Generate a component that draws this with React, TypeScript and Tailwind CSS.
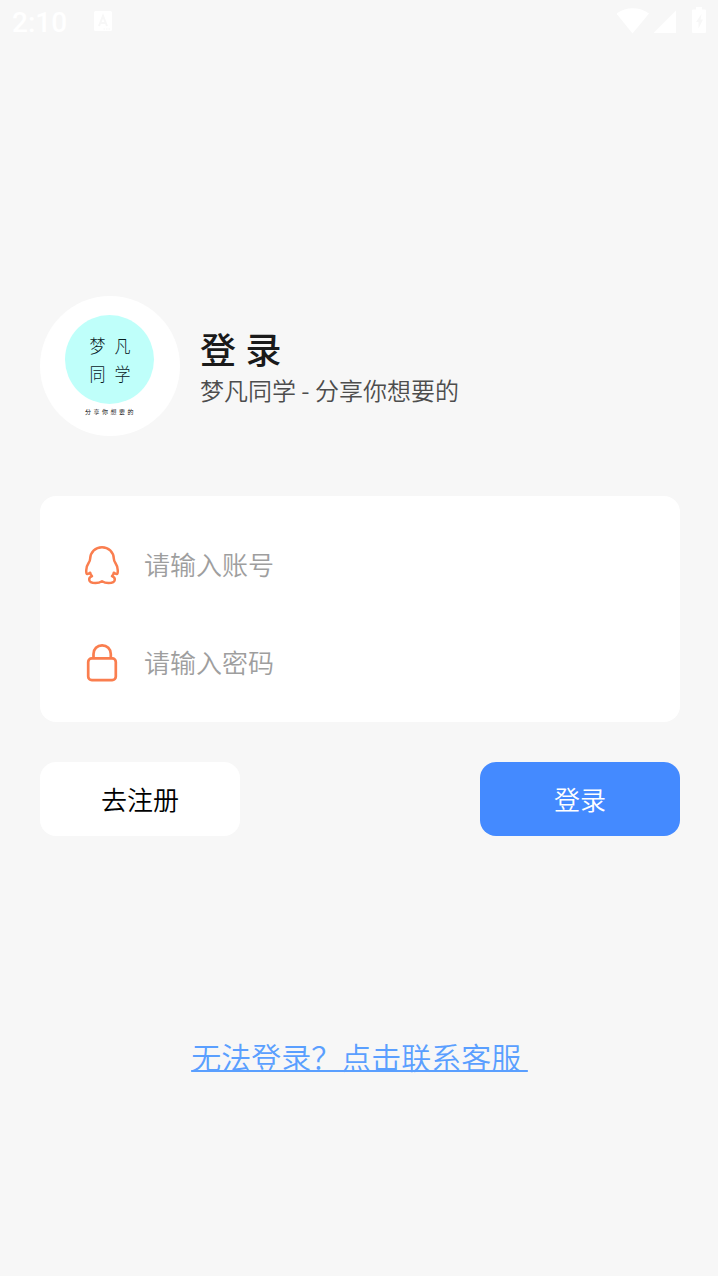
import type { ReactNode } from "react";

function StatusBar() {
  return (
    <div className="flex h-11 items-center justify-between pl-3 pr-[11px] text-white">
      <div className="flex items-center">
        <span className="w-[82px] pt-px font-[Roboto,sans-serif] text-[28px] font-medium leading-none">2:10</span>
        <svg width="18" height="20" viewBox="0 0 18 20" className="mb-0.5">
          <rect width="18" height="20" rx="1.5" fill="#fff" />
          <path d="M5 15 L9 5 L13 15 M6.5 12 H11.5" fill="none" stroke="#f7f7f7" strokeWidth="2" />
          <path d="M9.5 18 H16.5" stroke="#f7f7f7" strokeDasharray="1.5 1" />
        </svg>
      </div>
      <svg width="90" height="28" viewBox="0 0 90 28" fill="currentColor" className="mb-0.5">
        <path d="M-0.5 6.5 C9 -0.5 22.5 -0.5 32 6.5 L15.5 26.5 Z" />
        <path d="M37 26 V25.5 L59 3.5 V26 Z" />
        <path
          fillRule="evenodd"
          d="M75 3.5 Q75 2.5 76 2.5 H79 V0 H85 V2.5 H88 Q89 2.5 89 3.5 V25 Q89 26 88 26 H76 Q75 26 75 25 Z M84.5 7 L79 15 H81.5 V21.5 L86 12.5 H83.5 Z"
        />
      </svg>
    </div>
  );
}

function Logo() {
  return (
    <div className="flex h-[140px] w-[140px] flex-col items-center rounded-full bg-white pt-[18.5px] text-black">
      <div className="-ml-px flex h-[89px] w-[89px] items-center justify-center rounded-full bg-[#bffffa]">
        <div className="ml-px grid scale-y-115 grid-cols-2 gap-x-[9px] text-[16px] font-light leading-[23.5px] text-[#08201e]">
          <span>梦</span>
          <span>凡</span>
          <span>同</span>
          <span>学</span>
        </div>
      </div>
      <span className="mt-[3px] pl-px text-[6px] font-[350] leading-[10px] tracking-[2.5px]">分享你想要的</span>
    </div>
  );
}

function PenguinIcon() {
  return (
    <svg width="36" height="40" viewBox="0 0 36 40" fill="none" stroke="#fa7e4f" strokeWidth="2.5" strokeLinejoin="round">
      <path d="M18 2.3 C11.5 2.3 6.5 6.8 6.1 14 C6 18.5 2.2 18.5 2.2 25.5 C2.2 28 2.6 29.2 3.4 29.1 C4.4 29 5.2 28 6.2 27.8 C6.4 29.2 7 30.2 8 31.2 C6.2 32 5 33.2 5.2 34.8 C5.5 37 8 37.9 11.5 37.9 C14.5 37.9 16.2 37.3 18 36.2 C19.8 37.3 21.5 37.9 24.5 37.9 C28 37.9 30.5 37 30.8 34.8 C31 33.2 29.8 32 28 31.2 C29 30.2 29.6 29.2 29.8 27.8 C30.8 28 31.6 29 32.6 29.1 C33.4 29.2 33.8 28 33.8 25.5 C33.8 18.5 30 18.5 29.9 14 C29.5 6.8 24.5 2.3 18 2.3 Z" />
    </svg>
  );
}

function LockIcon() {
  return (
    <svg width="36" height="40" viewBox="0 0 36 40" fill="none" stroke="#fa7e4f" strokeWidth="2.7">
      <rect x="4.2" y="15.3" width="27.6" height="21.9" rx="3.6" />
      <path d="M9.5 15.3 V11 C9.5 5.8 13.2 2.4 18.1 2.4 C23 2.4 26.8 5.8 26.8 11 V15.3" />
    </svg>
  );
}

type FieldProps = {
  icon: ReactNode;
  type: string;
  placeholder: string;
};

function Field({ icon, type, placeholder }: FieldProps) {
  return (
    <label className="flex h-[98px] items-center gap-6 px-11">
      {icon}
      <input
        type={type}
        placeholder={placeholder}
        className="min-w-0 flex-1 bg-transparent pb-[3px] text-[26px] outline-none placeholder:text-[#9e9e9e]"
      />
    </label>
  );
}

export default function App() {
  return (
    <div className="h-[1276px] w-[718px] bg-[#f7f7f7] font-['Noto_Sans_CJK_SC',sans-serif] font-[350]">
      <StatusBar />

      <main className="pl-10 pr-[38px] pt-[252px]">
        <header className="flex items-center gap-5">
          <Logo />
          <div className="pt-1">
            <h1 className="text-[36px] font-medium leading-[43px] text-[#1a1a1a] [word-spacing:1.5px]">登 录</h1>
            <p className="text-[24px] leading-[40px] text-[#4d4d4d]">梦凡同学 - 分享你想要的</p>
          </div>
        </header>

        <section className="mt-[60px] h-[226px] rounded-2xl bg-white pt-5">
          <Field icon={<PenguinIcon />} type="text" placeholder="请输入账号" />
          <Field icon={<LockIcon />} type="password" placeholder="请输入密码" />
        </section>

        <div className="mt-10 flex justify-between text-[26px]">
          <button className="h-[74px] w-[200px] rounded-2xl bg-white pb-0.5 text-black">去注册</button>
          <button className="h-[74px] w-[200px] rounded-2xl bg-[#448aff] pb-0.5 text-white">登录</button>
        </div>

        <div className="mt-[198px] pr-px text-center">
          <a
            href="#"
            className="whitespace-pre text-[30px] leading-[44px] text-[#5a9fff] underline decoration-2 underline-offset-1"
          >
            {"无法登录？点击联系客服 "}
          </a>
        </div>
      </main>
    </div>
  );
}
